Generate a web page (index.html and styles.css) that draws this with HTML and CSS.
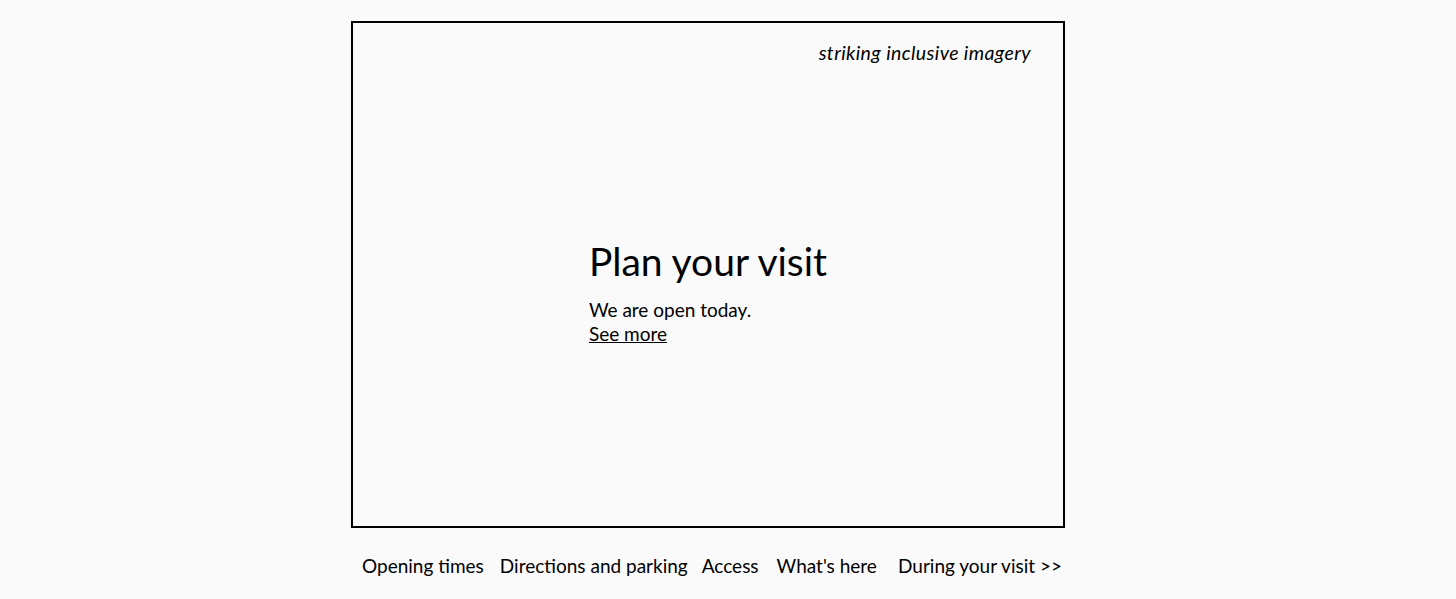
FILE: index.html
```html
<!DOCTYPE html>
<html lang="en">
<head>
    <meta charset="UTF-8">
    <meta name="viewport" content="width=device-width, initial-scale=1.0">
    <title>Plan your visit</title>
    <link rel="stylesheet" href="styles.css">
</head>
<body>
    <div class="page">
        <div class="hero">
            <p class="hero-note">striking inclusive imagery</p>
            <div class="hero-text">
                <h1>Plan your visit</h1>
                <p>We are open today.<br><a href="#">See more</a></p>
            </div>
        </div>

        <nav class="visit-nav">
            <a href="#">Opening times</a>
            <a href="#" class="tight">Directions and parking</a>
            <a href="#" class="wide">Access</a>
            <a href="#">What's here</a>
            <a href="#" class="more">During your visit &gt;&gt;</a>
        </nav>
    </div>
</body>
</html>
```

FILE: styles.css
```css
body {
    margin: 0;
    background-color: #fafafa;
    color: #000;
    font-family: Lato, "Noto Sans", sans-serif;
}
.page {
    width: 714px;
    margin: 21px 0 0 351px;
}
.hero {
    box-sizing: border-box;
    height: 507px;
    border: 2px solid #000;
    display: flex;
    flex-direction: column;
}
.hero-note {
    margin: 18px 32px 0 0;
    text-align: right;
    font-style: italic;
    font-size: 19.5px;
    letter-spacing: 0.4px;
}
.hero-text {
    flex: 1;
    display: flex;
    flex-direction: column;
    justify-content: center;
    align-self: center;
    padding: 0 0 6px 0;
}
.hero-text h1 {
    margin: 0 0 14px;
    font-size: 39px;
    font-weight: normal;
}
.hero-text p {
    margin: 0;
    font-size: 19px;
    line-height: 24px;
}
.hero-text a {
    color: #000;
}
.visit-nav {
    display: flex;
    gap: 16px;
    padding: 26px 0 0 11px;
    font-size: 19px;
}
.visit-nav a {
    color: #000;
    text-decoration: none;
}
.visit-nav .tight {
    margin-right: -2px;
}
.visit-nav .wide {
    margin-right: 2px;
}
.visit-nav .more {
    margin-left: auto;
    margin-right: 3px;
}
```
